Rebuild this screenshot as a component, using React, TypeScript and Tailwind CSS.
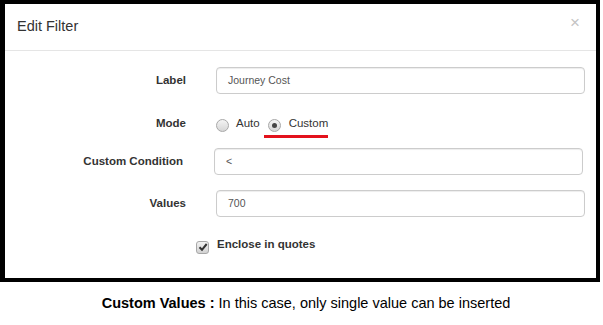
import React from "react";

const Radio: React.FC<{ checked?: boolean }> = ({ checked }) => (
  <span className="inline-flex items-center justify-center w-[13px] h-[13px] rounded-full border border-[#a8a8a8] bg-gradient-to-b from-[#f4f4f4] to-[#d6d6d6]">
    {checked && <span className="w-[5px] h-[5px] rounded-full bg-[#444]" />}
  </span>
);

const Field: React.FC<{ label: string; value: string; shift?: boolean }> = ({ label, value, shift }) => (
  <div className="flex items-center">
    <div className={shift ? "w-[178px] mr-[3px] text-right text-[11.5px] font-bold text-[#333]" : "w-[181px] text-right text-[11.5px] font-bold text-[#333]"}>
      {label}
    </div>
    <div className={shift ? "ml-[28px] mr-[13px] flex-1" : "ml-[30px] mr-[11px] flex-1"}>
      <div className="h-[27px] flex items-center px-[11px] border border-[#ccc] rounded-[4px] text-[10.5px] text-[#555] shadow-[inset_0_1px_1px_rgba(0,0,0,0.075)]">
        {value}
      </div>
    </div>
  </div>
);

const App: React.FC = () => {
  return (
    <div className="w-[603px] h-[325px] bg-white font-['Liberation_Sans',Arial,sans-serif]">
      <div className="w-[600px] h-[282px] border-[4px] border-l-[5px] border-black flex flex-col">
        <div className="h-[47px] flex items-center justify-between pl-[12px] pr-[16px] border-b border-[#e5e5e5]">
          <h4 className="text-[14.5px] text-[#333] -mt-[1px]">Edit Filter</h4>
          <span className="text-[17px] leading-none text-[#c4c4c4] -mt-[10px]">×</span>
        </div>
        <div className="flex flex-col pt-[16px]">
          <Field label="Label" value="Journey Cost" />
          <div className="flex items-center mt-[18px] h-[26px]">
            <div className="w-[181px] text-right text-[11.5px] font-bold text-[#333] -mt-[2px]">Mode</div>
            <div className="ml-[30px] flex items-center text-[11.5px] text-[#333]">
              <Radio />
              <span className="ml-[7px] mr-[4px] -mt-[2px]">Auto</span>
              <span className="flex items-center h-[26px] pt-[3px] border-b-[3px] border-[#e3121c] pl-[4px] pr-0">
                <Radio checked />
                <span className="ml-[8px] -mt-[3px]">Custom</span>
              </span>
            </div>
          </div>
          <div className="mt-[10px]">
            <Field label="Custom Condition" value="<" shift />
          </div>
          <div className="mt-[15px]">
            <Field label="Values" value="700" />
          </div>
          <div className="flex items-center mt-[15px] h-[26px] pl-[191px]">
            <span className="w-[13px] h-[13px] rounded-[3px] border border-[#a8a8a8] bg-gradient-to-b from-[#f2f2f2] to-[#d2d2d2] flex items-center justify-center mt-[4px]">
              <svg width="10" height="10" viewBox="0 0 10 10">
                <path d="M1.5 5.2 L4 7.8 L8.7 2" stroke="#333" strokeWidth="2" fill="none" />
              </svg>
            </span>
            <span className="ml-[8px] text-[11.5px] font-bold text-[#333]">Enclose in quotes</span>
          </div>
        </div>
      </div>
      <p className="text-center text-[14.5px] text-black mt-[11px] pl-[9px]">
        <b>Custom Values :</b> In this case, only single value can be inserted
      </p>
    </div>
  );
};

export default App;
